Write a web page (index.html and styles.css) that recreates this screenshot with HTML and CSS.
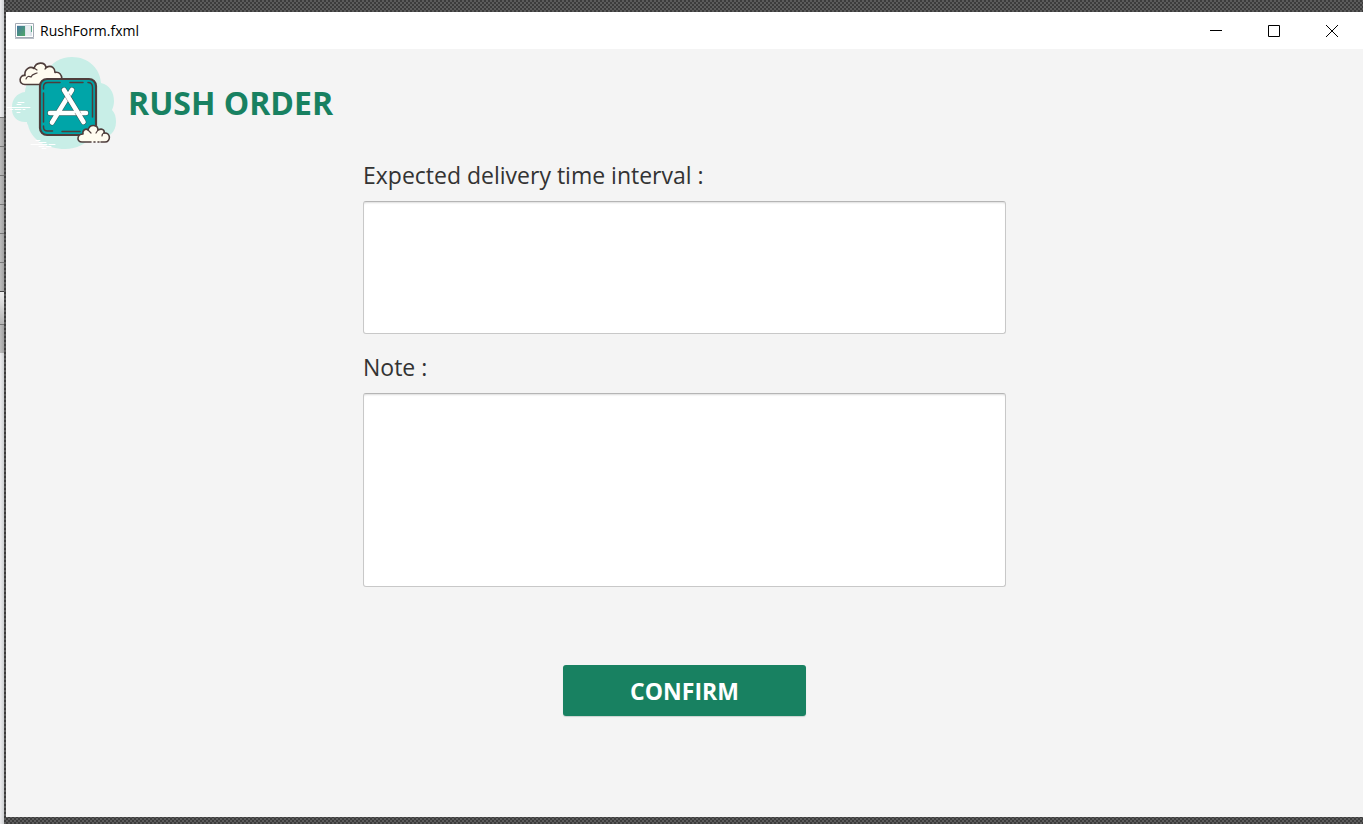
FILE: index.html
```html
<!DOCTYPE html>
<html lang="en">
<head>
<meta charset="utf-8">
<title>RushForm.fxml</title>
<link rel="stylesheet" href="styles.css">
</head>
<body>
<div class="dock" aria-hidden="true">
  <span class="dock-top"></span>
  <span class="dock-tab"></span><span class="dock-tab"></span><span class="dock-tab"></span><span class="dock-tab"></span><span class="dock-tab"></span><span class="dock-tab"></span>
  <span class="dock-tab dock-tab-active"></span><span class="dock-tab"></span>
</div>
<div class="desktop">
  <div class="window">
    <header class="titlebar">
      <svg class="app-icon" width="19" height="16" viewBox="0 0 19 16" aria-hidden="true">
        <defs><linearGradient id="pane" x1="0" y1="0" x2="1" y2="1"><stop offset="0" stop-color="#4477a0"/><stop offset="1" stop-color="#4fa866"/></linearGradient></defs>
        <path fill="#fff" stroke="#a5abb5" d="M.5.5h18v14H.5z"/>
        <path fill="#dce4eb" d="M2 2h15v11H2z"/>
        <path fill="url(#pane)" d="M2 3h8v10H2z"/>
        <path fill="#e9eef1" d="M11 3h4v10h-4z"/>
        <path fill="#5aa585" d="M16 3h1v6h-1z"/>
        <path fill="#b9bfc7" d="M0 15h19v1H0z"/>
      </svg>
      <span class="titlebar-name">RushForm.fxml</span>
      <div class="controls">
        <button class="control" type="button" aria-label="Minimize"><svg width="12" height="12" viewBox="0 0 12 12"><path d="M0 5.5h12"/></svg></button>
        <button class="control" type="button" aria-label="Maximize"><svg width="12" height="12" viewBox="0 0 12 12"><path d="M.5.5h11v11H.5z"/></svg></button>
        <button class="control" type="button" aria-label="Close"><svg width="12" height="12" viewBox="0 0 12 12"><path d="M0 0l12 12M12 0L0 12"/></svg></button>
      </div>
    </header>
    <div class="heading">
      <svg class="logo" width="122" height="105" viewBox="6 -1 122 105" role="img" aria-label="App store">
        <path fill="#c8eee7" d="M46 24C51 12 61 7 72 7c16 0 28 11 29 26 9 2 13 10 13 18 0 4-1 6-2 9 3 3 4 7 4 12 0 10-7 16-16 16-4 0-7-1-9-2-5 8-14 13-26 13-18 0-34-9-37-24-1-1-1-2-1-3-9 1-16-5-15-15 0-8 5-14 13-15 0-9 8-17 21-18z"/>
        <g fill="none" stroke="#fff" stroke-width="1" stroke-linecap="round">
          <path d="M18 52.500h6M17 54.500h4M7 57.500h23M10 59.500h3M15 59.500h6M23 59.500h2M17 62.500h3M36 90.500h4M39 92.500h7M31 94.500h16M49 94.500h6M39 96.500h5M46 96.500h5M42 98.500h4"/>
        </g>
        <path fill="#fffcf0" stroke="#4e3d3b" stroke-width="1.6" stroke-linejoin="round" d="M41 34.500H25c-7 0-6-10 0-9-1-6 5-10 9-7 2-7 11-7 12-1 6-3 9 1 9 5 4-1 7 2 7 7l-12 5z"/>
        <path fill="none" stroke="#4e3d3b" stroke-width="1.2" stroke-linecap="round" d="M26 29c1-3 3-3 5-2 1-3 4-3 6-4M34 18l3 2M47 17l-2 2"/>
        <rect x="40" y="29" width="56" height="56" rx="7" fill="#00a5a8" stroke="#4e3d3b" stroke-width="2.200"/>
        <path fill="none" stroke="#4e3d3b" stroke-width="1.500" stroke-linecap="round" d="M60 32.500H48q-4.500 0-4.500 4.500V39M70 32.500h13M88 32.500q4.500 0 4.500 5V67M43.500 43v29M43.500 76v1q0 4 4 4h5M62 81.500h18"/>
        <g fill="none" stroke-linecap="round">
          <path stroke="#4e3d3b" stroke-opacity=".7" stroke-width="5.600" d="M72 40L52 72.500M64 40l19.500 32M50 63h36"/>
          <path stroke="#fff" stroke-width="4.600" d="M50 63h36M72 40L52 72.500"/>
          <path stroke="#4e3d3b" stroke-opacity=".6" stroke-width="5.600" stroke-linecap="butt" d="M67 45l5 8M77 61.500l2 3.500"/>
          <path stroke="#fff" stroke-width="4.600" d="M64 40l19.500 32"/>
        </g>
        <path fill="#fffcf0" stroke="#4e3d3b" stroke-width="1.600" stroke-linejoin="round" stroke-linecap="round" d="M91 92h-9c-6 0-5-8 1-8-1-4 3-6 5-4 2-7 10-5 10 0 4-2 7 0 6 3 7-1 7 9 1 9h-4M98 92h1M94 92h1"/>
        <path fill="none" stroke="#4e3d3b" stroke-width="1.200" stroke-linecap="round" d="M88 80l3 3M98 80l-2 3M102 86q0-3 3-3"/>
      </svg>
      <h1 class="title">RUSH ORDER</h1>
    </div>
    <form class="form">
      <label class="label" for="interval">Expected delivery time interval :</label>
      <textarea class="field field-interval" id="interval"></textarea>
      <label class="label" for="note">Note :</label>
      <textarea class="field field-note" id="note"></textarea>
      <button class="confirm" type="button">CONFIRM</button>
    </form>
  </div>
</div>
</body>
</html>
```
FILE: styles.css
```css
* { box-sizing: border-box; }

body {
  margin: 0;
  min-height: 100vh;
  display: flex;
  background: #f4f4f4;
  color: #333;
  font-family: "Open Sans", "Noto Sans", sans-serif;
}

.dock {
  width: 4px;
  flex: none;
  display: flex;
  flex-direction: column;
  background: linear-gradient(90deg, #ececee, #d0d2d4);
}
.dock-top { height: 117px; }
.dock-tab {
  height: 29px;
  border-top: 1px solid #777;
  background: linear-gradient(90deg, #bdbdbd, #a3a3a3);
}
.dock-tab-active {
  height: 33px;
  border-color: #444;
  background: linear-gradient(#eee, #b5b5b5);
}

.desktop {
  flex: 1;
  display: flex;
  padding: 12px 0 7px 2px;
  background: repeating-conic-gradient(#5c5c5c 0 25%, #3c3c3c 0 50%) 0 0 / 4px 4px;
}
.window {
  flex: 1;
  display: flex;
  flex-direction: column;
  background: #f4f4f4;
}

.titlebar {
  height: 37px;
  display: flex;
  align-items: center;
  padding: 0 2px 0 9px;
  background: #fff;
  color: #000;
}
.titlebar-name {
  margin-left: 6px;
  font-size: 14px;
  line-height: 20px;
}
.controls {
  display: flex;
  height: 100%;
  margin-left: auto;
}
.control {
  width: 58px;
  padding: 0;
  border: 0;
  background: none;
  display: flex;
  align-items: center;
  justify-content: center;
}
.control svg {
  fill: none;
  stroke: #000;
}

.heading {
  display: flex;
  align-items: center;
}
.logo { flex: none; }
.title {
  margin: 0;
  padding-top: 2px;
  font-size: 32px;
  line-height: 40px;
  color: #188161;
}

.form {
  width: 100%;
  max-width: 643px;
  margin: 0 auto;
  display: flex;
  flex-direction: column;
}
.label {
  padding: 5px 0 10px;
  font-size: 23px;
  line-height: 32px;
}
.field {
  display: block;
  width: 100%;
  padding: 8px;
  border: 1px solid #c8c8c8;
  border-top-color: #b5b5b5;
  border-radius: 3px;
  background: #fff;
  box-shadow: inset 0 2px 2px -1px #ddd;
  font: inherit;
  resize: none;
}
.field-interval {
  height: 133px;
  margin-bottom: 12px;
}
.field-note { height: 194px; }
.confirm {
  width: 243px;
  height: 51px;
  margin: 78px auto 0;
  border: 0;
  border-radius: 3px;
  background: #188161;
  box-shadow: 0 1px 1px #c9d2cf;
  color: #fff;
  font: bold 23px/32px "Open Sans", "Noto Sans", sans-serif;
}
```
